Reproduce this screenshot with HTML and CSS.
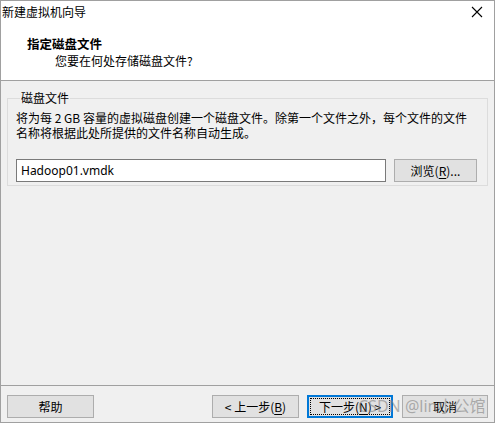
FILE: index.html
```html
<!DOCTYPE html>
<html lang="zh-CN">
<head>
<meta charset="utf-8">
<title>新建虚拟机向导</title>
<link rel="stylesheet" href="styles.css">
</head>
<body>
<div class="window">
  <div class="header">
    <div class="titlebar">
      <span class="title">新建虚拟机向导</span>
      <svg class="close" width="12" height="12" viewBox="0 0 12 12"><path d="M1 1 L11 11 M11 1 L1 11" stroke="#000" stroke-width="1.1" fill="none"/></svg>
    </div>
    <div class="head-title">指定磁盘文件</div>
    <div class="head-sub">您要在何处存储磁盘文件?</div>
  </div>
  <div class="content">
    <fieldset class="group">
      <legend class="legend">磁盘文件</legend>
      <p class="desc">将为每 2 GB 容量的虚拟磁盘创建一个磁盘文件。除第一个文件之外，每个文件的文件名称将根据此处所提供的文件名称自动生成。</p>
      <div class="file-row">
        <div class="input">Hadoop01.vmdk</div>
        <div class="btn browse">浏览(<u>R</u>)...</div>
      </div>
    </fieldset>
  </div>
  <div class="footer">
    <div class="btn help">帮助</div>
    <div class="spacer"></div>
    <div class="btn back">&lt; 上一步(<u>B</u>)</div>
    <div class="btn next focused"><span class="focus-rect">下一步(<u>N</u>) &gt;</span></div>
    <div class="btn cancel">取消</div>
    <div class="watermark">CSDN @lin小公馆</div>
  </div>
</div>
</body>
</html>
```

FILE: styles.css
```css
* { box-sizing: border-box; }
html, body { margin: 0; padding: 0; background: #f0f0f0; }
body {
  font-family: "Noto Sans", "Noto Sans CJK SC", sans-serif;
  font-size: 12px;
  color: #000;
}
.window {
  width: 495px;
  height: 423px;
  border: 1px solid #a0a0a0;
  background: #f0f0f0;
  display: flex;
  flex-direction: column;
}
.header {
  height: 80px;
  background: #fff;
  border-bottom: 1px solid #a0a0a0;
  flex: none;
}
.titlebar {
  height: 22px;
  display: flex;
  align-items: center;
  justify-content: space-between;
  padding: 0 11px 0 1px;
}
.title { line-height: 22px; font-family: "Noto Sans CJK SC", sans-serif; }
.close { display: block; }
.head-title {
  font-family: "Noto Sans CJK SC", sans-serif;
  font-weight: bold;
  font-size: 12.5px;
  line-height: 17px;
  padding-left: 26px;
  margin-top: 12px;
}
.head-sub {
  font-family: "Noto Sans CJK SC", sans-serif;
  line-height: 17px;
  padding-left: 54px;
}
.content {
  flex: 1;
  padding: 9px 6px 0 6px;
}
.group {
  margin: 0;
  border: 1px solid #dcdcdc;
  padding: 4px 10px 3px 8px;
  min-width: 0;
}
.legend {
  font-family: "Noto Sans CJK SC", sans-serif;
  padding: 0 1px;
  margin-left: 4px;
  line-height: 16px;
}
.desc {
  margin: 0;
  line-height: 15px;
  font-family: "Noto Sans CJK SC", sans-serif;
  padding-right: 2px;
}
.file-row {
  display: flex;
  gap: 8px;
  margin-top: 19px;
}
.input {
  width: 370px;
  height: 23px;
  background: #fff;
  border: 1px solid #7a7a7a;
  padding: 0 4px;
  line-height: 21px;
}
.btn {
  height: 23px;
  background: #e1e1e1;
  border: 1px solid #adadad;
  display: flex;
  align-items: center;
  justify-content: center;
  font-family: "Noto Sans CJK SC", sans-serif;
  line-height: 21px;
}
.btn u { text-underline-offset: 2px; }
.browse { width: 83px; }
.footer {
  flex: none;
  height: 37px;
  border-top: 1px solid #a0a0a0;
  display: flex;
  align-items: flex-start;
  padding: 9px 6px 0 6px;
  position: relative;
}
.spacer { flex: 1; }
.help { width: 87px; }
.back { width: 87px; }
.next { width: 86px; margin-left: 8px; }
.cancel { width: 86px; margin-left: 9px; }
.focused {
  border: 2px solid #0078d7;
  padding: 1px;
}
.focus-rect {
  width: 100%;
  height: 100%;
  border: 1px dotted #000;
  display: flex;
  align-items: center;
  justify-content: center;
  line-height: 17px;
}
.watermark {
  position: absolute;
  left: 357px;
  top: 8px;
  font-family: "Noto Sans", "Noto Sans CJK SC", sans-serif;
  font-size: 16px;
  line-height: 24px;
  color: rgba(130, 130, 130, 0.6);
  white-space: nowrap;
  pointer-events: none;
}
```
